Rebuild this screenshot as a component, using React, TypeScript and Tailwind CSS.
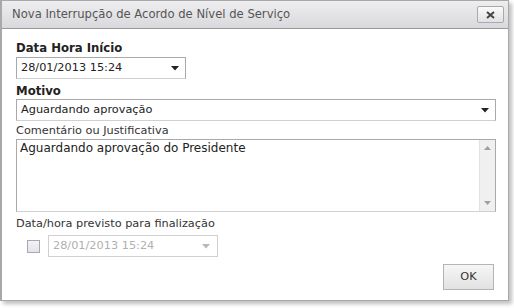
import { useState } from "react"

const font = { fontFamily: '"DejaVu Sans", Verdana, sans-serif' }

const Caret = ({ muted = false }: { muted?: boolean }) => (
  <svg width="8" height="5" viewBox="0 0 8 5" className="shrink-0">
    <path d="M0 0h8L4 4.5z" fill={muted ? "#b8b8b8" : "#222"} />
  </svg>
)

export default function App() {
  const [comment, setComment] = useState("Aguardando aprovação do Presidente")

  return (
    <div className="w-[514px] h-[308px] bg-white text-[11.3px] text-[#222]" style={font}>
      <div className="w-[509px] h-[301px] flex flex-col border border-[#a8a8a8] border-l-2 shadow-[3px_3px_4px_rgba(0,0,0,0.25)]">
        {/* Title bar */}
        <div className="h-[28px] shrink-0 flex items-center justify-between pl-[10px] pr-[4px] bg-gradient-to-b from-[#eeeef0] to-[#d9d9dd] border-b border-[#9a9a9a]">
          <span className="text-[11.6px] text-[#555]">Nova Interrupção de Acordo de Nível de Serviço</span>
          <button className="w-[27px] h-[17px] flex items-center justify-center rounded-[2px] border border-[#aaa] bg-gradient-to-b from-[#fafafa] to-[#e2e2e2]">
            <svg width="9" height="8" viewBox="0 0 9 8">
              <path d="M1 1l7 6M8 1L1 7" stroke="#444" strokeWidth="2" />
            </svg>
          </button>
        </div>

        {/* Body */}
        <div className="flex-1 flex flex-col px-[14px] pt-[12px]">
          <label className="font-bold text-[11.7px] leading-[14px]">Data Hora Início</label>
          <div className="mt-[2px] w-[170px] h-[22px] flex items-center justify-between pl-[4px] pr-[6px] border border-[#a9a9a9] border-b-[#d0d0d0]">
            <span>28/01/2013 15:24</span>
            <Caret />
          </div>

          <label className="mt-[5px] font-bold text-[11.7px] leading-[14px]">Motivo</label>
          <div className="mt-[1px] w-[480px] h-[22px] flex items-center justify-between pl-[4px] pr-[6px] border border-[#a9a9a9] border-b-[#d0d0d0]">
            <span>Aguardando aprovação</span>
            <Caret />
          </div>

          <label className="mt-[3px] leading-[14px] text-[#333]">Comentário ou Justificativa</label>
          <div className="mt-[1px] w-[480px] h-[73px] flex border border-[#a9a9a9] border-b-[#d0d0d0]">
            <textarea
              value={comment}
              onChange={(e) => setComment(e.target.value)}
              className="flex-1 resize-none outline-none px-[3px] pt-[1px] leading-[14px] text-[12px] text-[#222]"
              style={font}
            />
            <div className="w-[16px] flex flex-col items-center justify-between py-[6px] bg-[#f0f0f0] border-l border-[#e2e2e2]">
              <svg width="7" height="4" viewBox="0 0 7 4">
                <path d="M0 4h7L3.5 0z" fill="#a0a0a0" />
              </svg>
              <svg width="7" height="4" viewBox="0 0 7 4">
                <path d="M0 0h7L3.5 4z" fill="#a0a0a0" />
              </svg>
            </div>
          </div>

          <label className="mt-[5px] leading-[14px] text-[#333]">Data/hora previsto para finalização</label>
          <div className="mt-[4px] flex items-center gap-[8px] pl-[11px]">
            <span className="w-[13px] h-[13px] border border-[#a8a8b0] bg-gradient-to-b from-[#f4f4f4] to-[#e4e4e8]" />
            <div className="w-[170px] h-[22px] flex items-center justify-between pl-[4px] pr-[7px] border border-[#d0d0d0]">
              <span className="text-[#b0b0b0]">28/01/2013 15:24</span>
              <Caret muted />
            </div>
          </div>

          <div className="mt-[7px] flex justify-end">
            <button className="w-[51px] h-[26px] text-[11.3px] text-[#333] border border-[#b4b4b4] bg-gradient-to-b from-[#f6f6f6] to-[#e2e2e2]">
              OK
            </button>
          </div>
        </div>
      </div>
    </div>
  )
}
